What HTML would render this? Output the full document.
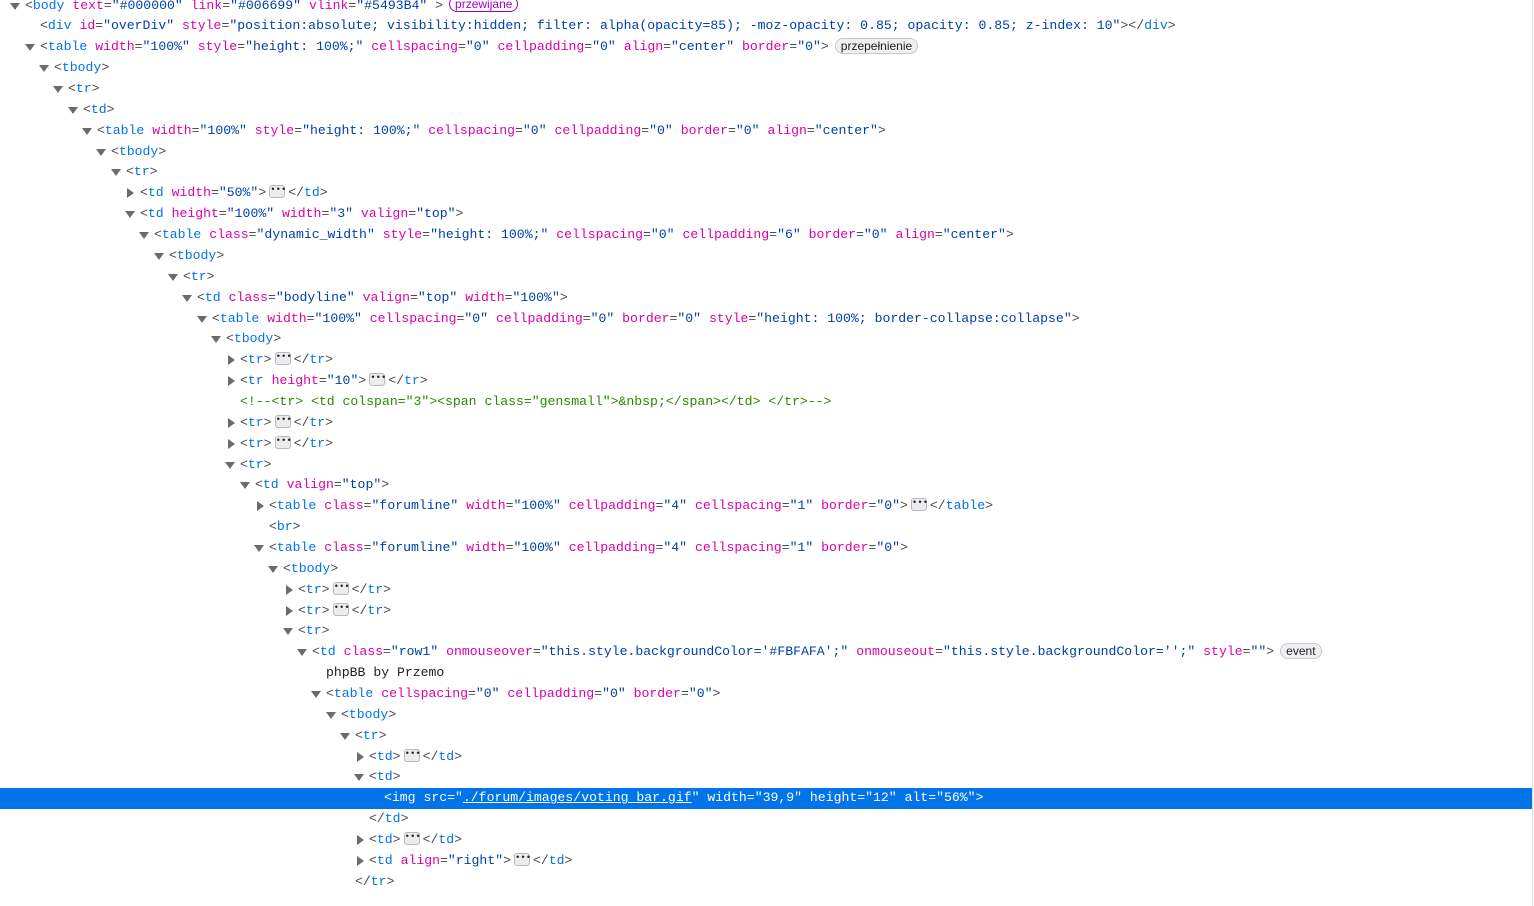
<!DOCTYPE html>
<html><head><meta charset="utf-8"><style>
html,body{margin:0;padding:0;background:#fff;width:1534px;height:892px;overflow:hidden}
#c{position:absolute;left:0;top:-4.4px;width:1532px;border-right:1px solid #e0e0e4;height:910px}
.l{position:relative;height:20.87px;line-height:20.87px;font-family:"Liberation Mono",monospace;font-size:13.15px;color:#4a4a4f;white-space:pre}
.tw{position:absolute;top:0}
.a{position:absolute;top:7px;width:0;height:0}
.a.o{border-left:5px solid transparent;border-right:5px solid transparent;border-top:7px solid #6b6b6b}
.a.c{border-top:5px solid transparent;border-bottom:5px solid transparent;border-left:7px solid #6b6b6b;top:5px}
.t{color:#0074e8}.n{color:#dd00a9}.v{color:#003eaa}.cm{color:#2a8a00}
.d{display:inline-block;width:14px;height:11px;border:1px solid #b8b8bd;border-radius:3px;background:#ececef;vertical-align:middle;margin:0 3px 0 3px;position:relative;top:-1px;font-size:9px;line-height:9px;text-align:center;color:#222}
.b{display:inline-block;border:1px solid #c8c8cc;border-radius:8px;padding:0 5px;line-height:14px;font-family:"Liberation Sans",sans-serif;font-size:12px;color:#222;background:#f0f0f3;margin-left:6px;vertical-align:middle;position:relative;top:-1px}
.sel{background:#0074e8}
.sel *, .sel{color:#fff!important}
</style></head><body><div id="c">
<div class="l"><span class="a o" style="left:10px"></span><span class="tw" style="left:25px">&lt;<span class="t">body</span> <span class="n">text</span>=<span class="v">"#000000"</span> <span class="n">link</span>=<span class="v">"#006699"</span> <span class="n">vlink</span>=<span class="v">"#5493B4"</span> &gt;<span class="b" style="color:#a000c8;border-color:#a000c8;background:#fff">przewijane</span></span></div>
<div class="l"><span class="tw" style="left:40px">&lt;<span class="t">div</span> <span class="n">id</span>=<span class="v">"overDiv"</span> <span class="n">style</span>=<span class="v">"position:absolute; visibility:hidden; filter: alpha(opacity=85); -moz-opacity: 0.85; opacity: 0.85; z-index: 10"</span>&gt;&lt;/<span class="t">div</span>&gt;</span></div>
<div class="l"><span class="a o" style="left:25px"></span><span class="tw" style="left:40px">&lt;<span class="t">table</span> <span class="n">width</span>=<span class="v">"100%"</span> <span class="n">style</span>=<span class="v">"height: 100%;"</span> <span class="n">cellspacing</span>=<span class="v">"0"</span> <span class="n">cellpadding</span>=<span class="v">"0"</span> <span class="n">align</span>=<span class="v">"center"</span> <span class="n">border</span>=<span class="v">"0"</span>&gt;<span class="b">przepełnienie</span></span></div>
<div class="l"><span class="a o" style="left:39px"></span><span class="tw" style="left:54px">&lt;<span class="t">tbody</span>&gt;</span></div>
<div class="l"><span class="a o" style="left:53px"></span><span class="tw" style="left:68px">&lt;<span class="t">tr</span>&gt;</span></div>
<div class="l"><span class="a o" style="left:68px"></span><span class="tw" style="left:83px">&lt;<span class="t">td</span>&gt;</span></div>
<div class="l"><span class="a o" style="left:82px"></span><span class="tw" style="left:97px">&lt;<span class="t">table</span> <span class="n">width</span>=<span class="v">"100%"</span> <span class="n">style</span>=<span class="v">"height: 100%;"</span> <span class="n">cellspacing</span>=<span class="v">"0"</span> <span class="n">cellpadding</span>=<span class="v">"0"</span> <span class="n">border</span>=<span class="v">"0"</span> <span class="n">align</span>=<span class="v">"center"</span>&gt;</span></div>
<div class="l"><span class="a o" style="left:96px"></span><span class="tw" style="left:111px">&lt;<span class="t">tbody</span>&gt;</span></div>
<div class="l"><span class="a o" style="left:111px"></span><span class="tw" style="left:126px">&lt;<span class="t">tr</span>&gt;</span></div>
<div class="l"><span class="a c" style="left:127px"></span><span class="tw" style="left:140px">&lt;<span class="t">td</span> <span class="n">width</span>=<span class="v">"50%"</span>&gt;<span class="d">•••</span>&lt;/<span class="t">td</span>&gt;</span></div>
<div class="l"><span class="a o" style="left:125px"></span><span class="tw" style="left:140px">&lt;<span class="t">td</span> <span class="n">height</span>=<span class="v">"100%"</span> <span class="n">width</span>=<span class="v">"3"</span> <span class="n">valign</span>=<span class="v">"top"</span>&gt;</span></div>
<div class="l"><span class="a o" style="left:139px"></span><span class="tw" style="left:154px">&lt;<span class="t">table</span> <span class="n">class</span>=<span class="v">"dynamic_width"</span> <span class="n">style</span>=<span class="v">"height: 100%;"</span> <span class="n">cellspacing</span>=<span class="v">"0"</span> <span class="n">cellpadding</span>=<span class="v">"6"</span> <span class="n">border</span>=<span class="v">"0"</span> <span class="n">align</span>=<span class="v">"center"</span>&gt;</span></div>
<div class="l"><span class="a o" style="left:154px"></span><span class="tw" style="left:169px">&lt;<span class="t">tbody</span>&gt;</span></div>
<div class="l"><span class="a o" style="left:168px"></span><span class="tw" style="left:183px">&lt;<span class="t">tr</span>&gt;</span></div>
<div class="l"><span class="a o" style="left:182px"></span><span class="tw" style="left:197px">&lt;<span class="t">td</span> <span class="n">class</span>=<span class="v">"bodyline"</span> <span class="n">valign</span>=<span class="v">"top"</span> <span class="n">width</span>=<span class="v">"100%"</span>&gt;</span></div>
<div class="l"><span class="a o" style="left:197px"></span><span class="tw" style="left:212px">&lt;<span class="t">table</span> <span class="n">width</span>=<span class="v">"100%"</span> <span class="n">cellspacing</span>=<span class="v">"0"</span> <span class="n">cellpadding</span>=<span class="v">"0"</span> <span class="n">border</span>=<span class="v">"0"</span> <span class="n">style</span>=<span class="v">"height: 100%; border-collapse:collapse"</span>&gt;</span></div>
<div class="l"><span class="a o" style="left:211px"></span><span class="tw" style="left:226px">&lt;<span class="t">tbody</span>&gt;</span></div>
<div class="l"><span class="a c" style="left:228px"></span><span class="tw" style="left:240px">&lt;<span class="t">tr</span>&gt;<span class="d">•••</span>&lt;/<span class="t">tr</span>&gt;</span></div>
<div class="l"><span class="a c" style="left:228px"></span><span class="tw" style="left:240px">&lt;<span class="t">tr</span> <span class="n">height</span>=<span class="v">"10"</span>&gt;<span class="d">•••</span>&lt;/<span class="t">tr</span>&gt;</span></div>
<div class="l"><span class="tw cm" style="left:240px">&lt;!--&lt;tr&gt; &lt;td colspan="3"&gt;&lt;span class="gensmall"&gt;&amp;nbsp;&lt;/span&gt;&lt;/td&gt; &lt;/tr&gt;--&gt;</span></div>
<div class="l"><span class="a c" style="left:228px"></span><span class="tw" style="left:240px">&lt;<span class="t">tr</span>&gt;<span class="d">•••</span>&lt;/<span class="t">tr</span>&gt;</span></div>
<div class="l"><span class="a c" style="left:228px"></span><span class="tw" style="left:240px">&lt;<span class="t">tr</span>&gt;<span class="d">•••</span>&lt;/<span class="t">tr</span>&gt;</span></div>
<div class="l"><span class="a o" style="left:225px"></span><span class="tw" style="left:240px">&lt;<span class="t">tr</span>&gt;</span></div>
<div class="l"><span class="a o" style="left:240px"></span><span class="tw" style="left:255px">&lt;<span class="t">td</span> <span class="n">valign</span>=<span class="v">"top"</span>&gt;</span></div>
<div class="l"><span class="a c" style="left:257px"></span><span class="tw" style="left:269px">&lt;<span class="t">table</span> <span class="n">class</span>=<span class="v">"forumline"</span> <span class="n">width</span>=<span class="v">"100%"</span> <span class="n">cellpadding</span>=<span class="v">"4"</span> <span class="n">cellspacing</span>=<span class="v">"1"</span> <span class="n">border</span>=<span class="v">"0"</span>&gt;<span class="d">•••</span>&lt;/<span class="t">table</span>&gt;</span></div>
<div class="l"><span class="tw" style="left:269px">&lt;<span class="t">br</span>&gt;</span></div>
<div class="l"><span class="a o" style="left:254px"></span><span class="tw" style="left:269px">&lt;<span class="t">table</span> <span class="n">class</span>=<span class="v">"forumline"</span> <span class="n">width</span>=<span class="v">"100%"</span> <span class="n">cellpadding</span>=<span class="v">"4"</span> <span class="n">cellspacing</span>=<span class="v">"1"</span> <span class="n">border</span>=<span class="v">"0"</span>&gt;</span></div>
<div class="l"><span class="a o" style="left:268px"></span><span class="tw" style="left:283px">&lt;<span class="t">tbody</span>&gt;</span></div>
<div class="l"><span class="a c" style="left:286px"></span><span class="tw" style="left:298px">&lt;<span class="t">tr</span>&gt;<span class="d">•••</span>&lt;/<span class="t">tr</span>&gt;</span></div>
<div class="l"><span class="a c" style="left:286px"></span><span class="tw" style="left:298px">&lt;<span class="t">tr</span>&gt;<span class="d">•••</span>&lt;/<span class="t">tr</span>&gt;</span></div>
<div class="l"><span class="a o" style="left:283px"></span><span class="tw" style="left:298px">&lt;<span class="t">tr</span>&gt;</span></div>
<div class="l"><span class="a o" style="left:297px"></span><span class="tw" style="left:312px">&lt;<span class="t">td</span> <span class="n">class</span>=<span class="v">"row1"</span> <span class="n">onmouseover</span>=<span class="v">"this.style.backgroundColor='#FBFAFA';"</span> <span class="n">onmouseout</span>=<span class="v">"this.style.backgroundColor='';"</span> <span class="n">style</span>=<span class="v">""</span>&gt;<span class="b">event</span></span></div>
<div class="l"><span class="tw" style="left:326px;color:#222">phpBB by Przemo</span></div>
<div class="l"><span class="a o" style="left:311px"></span><span class="tw" style="left:326px">&lt;<span class="t">table</span> <span class="n">cellspacing</span>=<span class="v">"0"</span> <span class="n">cellpadding</span>=<span class="v">"0"</span> <span class="n">border</span>=<span class="v">"0"</span>&gt;</span></div>
<div class="l"><span class="a o" style="left:326px"></span><span class="tw" style="left:341px">&lt;<span class="t">tbody</span>&gt;</span></div>
<div class="l"><span class="a o" style="left:340px"></span><span class="tw" style="left:355px">&lt;<span class="t">tr</span>&gt;</span></div>
<div class="l"><span class="a c" style="left:357px"></span><span class="tw" style="left:369px">&lt;<span class="t">td</span>&gt;<span class="d">•••</span>&lt;/<span class="t">td</span>&gt;</span></div>
<div class="l"><span class="a o" style="left:354px"></span><span class="tw" style="left:369px">&lt;<span class="t">td</span>&gt;</span></div>
<div class="l sel"><span class="tw" style="left:384px">&lt;<span class="t">img</span> <span class="n">src</span>=<span class="v">"<u>./forum/images/voting_bar.gif</u>"</span> <span class="n">width</span>=<span class="v">"39,9"</span> <span class="n">height</span>=<span class="v">"12"</span> <span class="n">alt</span>=<span class="v">"56%"</span>&gt;</span></div>
<div class="l"><span class="tw" style="left:369px">&lt;/<span class="t">td</span>&gt;</span></div>
<div class="l"><span class="a c" style="left:357px"></span><span class="tw" style="left:369px">&lt;<span class="t">td</span>&gt;<span class="d">•••</span>&lt;/<span class="t">td</span>&gt;</span></div>
<div class="l"><span class="a c" style="left:357px"></span><span class="tw" style="left:369px">&lt;<span class="t">td</span> <span class="n">align</span>=<span class="v">"right"</span>&gt;<span class="d">•••</span>&lt;/<span class="t">td</span>&gt;</span></div>
<div class="l"><span class="tw" style="left:355px">&lt;/<span class="t">tr</span>&gt;</span></div>
</div></body></html>
